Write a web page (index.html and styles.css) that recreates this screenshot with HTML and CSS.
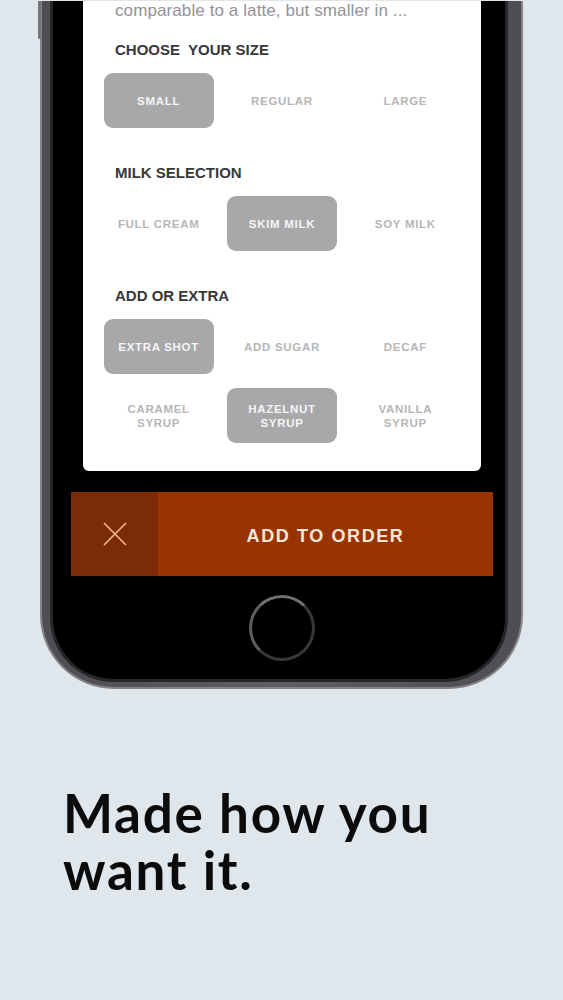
FILE: index.html
```html
<!DOCTYPE html>
<html lang="en">
<head>
    <meta charset="UTF-8">
    <meta name="viewport" content="width=device-width, initial-scale=1.0">
    <title>Made how you want it</title>
    <link rel="stylesheet" href="styles.css">
</head>
<body>
    <div class="phone">
        <div class="phone-face">
            <div class="screen">
                <div class="sheet">
                    <p class="description">comparable to a latte, but smaller in ...</p>

                    <h3 class="section-title">CHOOSE&nbsp; YOUR SIZE</h3>
                    <div class="options">
                        <div class="option selected">SMALL</div>
                        <div class="option">REGULAR</div>
                        <div class="option">LARGE</div>
                    </div>

                    <h3 class="section-title">MILK SELECTION</h3>
                    <div class="options">
                        <div class="option">FULL CREAM</div>
                        <div class="option selected">SKIM MILK</div>
                        <div class="option">SOY MILK</div>
                    </div>

                    <h3 class="section-title">ADD OR EXTRA</h3>
                    <div class="options">
                        <div class="option selected">EXTRA SHOT</div>
                        <div class="option">ADD SUGAR</div>
                        <div class="option">DECAF</div>
                        <div class="option">CARAMEL<br>SYRUP</div>
                        <div class="option selected">HAZELNUT<br>SYRUP</div>
                        <div class="option">VANILLA<br>SYRUP</div>
                    </div>
                </div>

                <div class="order-bar">
                    <button class="close-button" type="button" aria-label="Close">
                        <svg width="24" height="24" viewBox="0 0 24 24">
                            <path d="M1 1 L23 23 M23 1 L1 23" stroke="#f2b891" stroke-width="1.6" fill="none"/>
                        </svg>
                    </button>
                    <button class="add-button" type="button">ADD TO ORDER</button>
                </div>
            </div>
            <div class="home-button"></div>
        </div>
    </div>

    <h1 class="tagline">Made how you<br>want it.</h1>
</body>
</html>
```

FILE: styles.css
```css
* {
    margin: 0;
    padding: 0;
    box-sizing: border-box;
}

body {
    background: #dfe6ec;
    font-family: 'Liberation Sans', Arial, sans-serif;
    height: 1000px;
    overflow: hidden;
}

/* device frame */
.phone {
    position: relative;
    width: 483px;
    margin-left: 40px;
    padding: 0 13px 5px 8px;
    background: linear-gradient(90deg, #4e4e52 0%, #5e5e62 50%, #4e4e52 100%);
    border: 2px solid #848488;
    border-top: none;
    border-radius: 0 0 74px 74px;
}

.phone::before {
    content: "";
    position: absolute;
    left: -4px;
    top: 0;
    width: 3px;
    height: 38px;
    background: #74747a;
    border-radius: 0 0 2px 2px;
}

.phone-face {
    background: #000;
    border: 3px solid #262629;
    border-top: none;
    border-radius: 0 0 64px 64px;
    padding: 0 12px 18px 18px;
}

/* options sheet */
.sheet {
    margin: 0 12px;
    padding: 0 14px 28px;
    background: #fff;
    border-radius: 0 0 6px 6px;
}

.description {
    margin-top: 1px;
    padding-left: 18px;
    font-size: 17px;
    line-height: 20px;
    letter-spacing: 0.1px;
    color: #939397;
    white-space: nowrap;
}

.section-title {
    margin-top: 36px;
    padding-left: 18px;
    font-size: 15px;
    line-height: 18px;
    font-weight: bold;
    color: #38383a;
}

.description + .section-title {
    margin-top: 20px;
}

.options {
    display: grid;
    grid-template-columns: repeat(3, 1fr);
    row-gap: 14px;
    margin-top: 14px;
}

.option {
    justify-self: center;
    width: 110px;
    height: 55px;
    display: flex;
    align-items: center;
    justify-content: center;
    text-align: center;
    border-radius: 9px;
    font-size: 11.5px;
    line-height: 14px;
    font-weight: bold;
    letter-spacing: 0.7px;
    color: #b6b6b8;
}

.option.selected {
    background: #a8a8aa;
    color: #f5f5f5;
}

/* bottom action bar */
.order-bar {
    display: flex;
    height: 84px;
    margin-top: 21px;
}

.close-button,
.add-button {
    border: none;
    font-family: inherit;
}

.close-button {
    width: 87px;
    display: flex;
    align-items: center;
    justify-content: center;
    background: #7b2b06;
}

.add-button {
    flex: 1;
    padding-top: 4px;
    background: #993401;
    color: #f6e7db;
    font-size: 18px;
    font-weight: bold;
    letter-spacing: 1.6px;
}

.home-button {
    width: 66px;
    height: 66px;
    margin: 19px auto 0;
    border-radius: 50%;
    border: 3px solid #38383b;
    border-top-color: #707074;
    border-left-color: #5e5e62;
}

.tagline {
    margin: 95px 0 0 63px;
    font-family: Lato, 'Noto Sans', sans-serif;
    font-size: 53px;
    line-height: 57px;
    font-weight: 700;
    letter-spacing: 1.7px;
    color: #0b0b0c;
}
```
